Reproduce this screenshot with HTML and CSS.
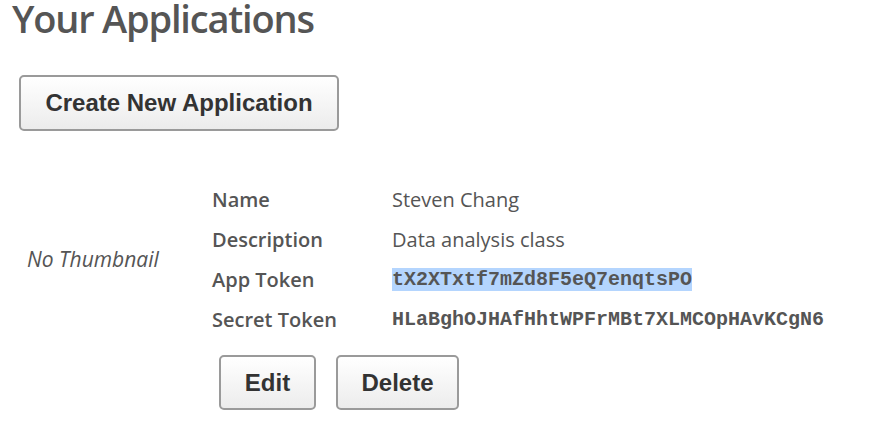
FILE: index.html
```html
<!DOCTYPE html>
<html>
<head>
<meta charset="utf-8">
<link rel="stylesheet" href="styles.css">
</head>
<body>
<h1 class="title">Your Applications</h1>
<div class="create-row">
  <button class="btn btn-create">Create New Application</button>
</div>
<div class="app">
  <div class="thumb">No Thumbnail</div>
  <div class="details">
    <div class="fields">
      <div class="label">Name</div><div class="value">Steven Chang</div>
      <div class="label">Description</div><div class="value">Data analysis class</div>
      <div class="label">App Token</div><div class="value mono"><span class="sel">tX2XTxtf7mZd8F5eQ7enqtsPO</span></div>
      <div class="label">Secret Token</div><div class="value mono">HLaBghOJHAfHhtWPFrMBt7XLMCOpHAvKCgN6</div>
    </div>
    <div class="actions">
      <button class="btn btn-edit">Edit</button>
      <button class="btn btn-delete">Delete</button>
    </div>
  </div>
</div>
</body>
</html>
```
FILE: styles.css
```css
html, body {
  margin: 0;
  padding: 0;
  background: #fff;
}
body {
  font-family: "Open Sans", sans-serif;
  color: #555;
  padding-left: 12px;
}
.title {
  margin: 0;
  margin-top: -7px;
  font-size: 38px;
  font-weight: 600;
  letter-spacing: -1.2px;
  line-height: 50px;
  color: #555;
}
.create-row {
  margin-top: 32px;
  padding-left: 7px;
}
.btn {
  font-family: "Liberation Sans", Arial, sans-serif;
  font-weight: bold;
  color: #333;
  font-size: 24px;
  background: linear-gradient(#ffffff, #ececec);
  border: 2px solid #9a9a9a;
  border-radius: 5px;
  padding: 0;
  cursor: pointer;
}
.btn-create {
  width: 320px;
  height: 56px;
}
.app {
  display: flex;
  margin-top: 48px;
}
.thumb {
  width: 200px;
  padding-left: 15px;
  box-sizing: border-box;
  display: flex;
  align-items: center;
  font-style: italic;
  font-size: 21px;
  height: 160px;
}
.fields {
  display: grid;
  grid-template-columns: 180px auto;
  grid-auto-rows: 40px;
  align-items: center;
}
.label {
  font-weight: 600;
  font-size: 20px;
}
.value {
  font-size: 20px;
}
.mono {
  font-family: "Liberation Mono", "Courier New", monospace;
  font-size: 20px;
  font-weight: bold;
  color: #555;
}
.sel {
  background: #b4d5fe;
  display: inline-block;
  line-height: 23px;
}
.actions {
  display: flex;
  gap: 20px;
  padding-left: 7px;
  margin-top: 16px;
}
.btn-edit {
  width: 97px;
  height: 55px;
}
.btn-delete {
  width: 123px;
  height: 55px;
}
```
